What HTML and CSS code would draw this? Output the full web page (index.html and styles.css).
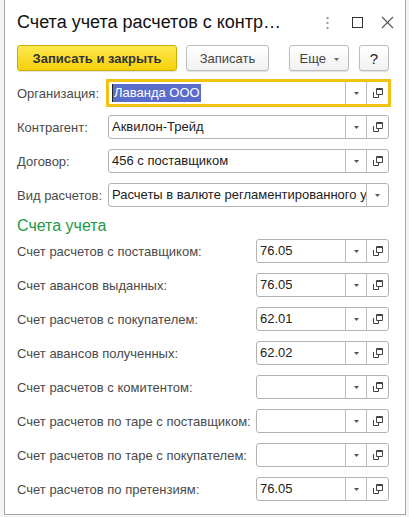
FILE: index.html
```html
<!DOCTYPE html>
<html lang="ru">
<head>
    <meta charset="UTF-8">
    <title>Счета учета расчетов с контрагентами</title>
    <meta name="viewport" content="width=device-width, initial-scale=1.0">
    <link rel="stylesheet" href="styles.css">
</head>
<body>
    <div class="window">
        <div class="titlebar">
            <div class="title">Счета учета расчетов с контр…</div>
            <div class="title-tools">
                <span class="tool">
                    <svg width="3" height="12" viewBox="0 0 3 12"><rect x="0.5" y="0" width="2" height="2" fill="#9a9a9a"/><rect x="0.5" y="5" width="2" height="2" fill="#9a9a9a"/><rect x="0.5" y="10" width="2" height="2" fill="#9a9a9a"/></svg>
                </span>
                <span class="tool">
                    <svg width="11" height="11" viewBox="0 0 11 11"><rect x="0.5" y="0.5" width="10" height="10" fill="none" stroke="#333"/></svg>
                </span>
                <span class="tool">
                    <svg width="13" height="13" viewBox="0 0 13 13"><path d="M1 1L12 12M12 1L1 12" stroke="#555" stroke-width="1.1"/></svg>
                </span>
            </div>
        </div>

        <div class="toolbar">
            <button class="btn btn-main">Записать и закрыть</button>
            <button class="btn btn-save">Записать</button>
            <button class="btn btn-more">Еще <svg width="5" height="3" viewBox="0 0 5 3"><path d="M0 0h5L2.5 3z" fill="#666"/></svg></button>
            <button class="btn btn-help">?</button>
        </div>

        <div class="form">
            <div class="row">
                <div class="label">Организация:</div>
                <div class="field focused">
                    <div class="value"><span class="selected">Лаванда ООО</span></div>
                    <div class="drop"><svg width="5" height="3" viewBox="0 0 5 3"><path d="M0 0h5L2.5 3z" fill="#555"/></svg></div>
                    <div class="open"><svg width="11" height="11" viewBox="0 0 11 11"><path d="M4.5 1.5h6M4.5 0.5h6v6h-6z" fill="none" stroke="#444"/><path d="M1.5 4v5.5h5V7" fill="none" stroke="#444"/></svg></div>
                </div>
            </div>
            <div class="row">
                <div class="label">Контрагент:</div>
                <div class="field">
                    <div class="value">Аквилон-Трейд</div>
                    <div class="drop"><svg width="5" height="3" viewBox="0 0 5 3"><path d="M0 0h5L2.5 3z" fill="#555"/></svg></div>
                    <div class="open"><svg width="11" height="11" viewBox="0 0 11 11"><path d="M4.5 1.5h6M4.5 0.5h6v6h-6z" fill="none" stroke="#444"/><path d="M1.5 4v5.5h5V7" fill="none" stroke="#444"/></svg></div>
                </div>
            </div>
            <div class="row">
                <div class="label">Договор:</div>
                <div class="field">
                    <div class="value">456 с поставщиком</div>
                    <div class="drop"><svg width="5" height="3" viewBox="0 0 5 3"><path d="M0 0h5L2.5 3z" fill="#555"/></svg></div>
                    <div class="open"><svg width="11" height="11" viewBox="0 0 11 11"><path d="M4.5 1.5h6M4.5 0.5h6v6h-6z" fill="none" stroke="#444"/><path d="M1.5 4v5.5h5V7" fill="none" stroke="#444"/></svg></div>
                </div>
            </div>
            <div class="row">
                <div class="label">Вид расчетов:</div>
                <div class="field">
                    <div class="value">Расчеты в валюте регламентированного учета</div>
                    <div class="drop wide"><svg width="5" height="3" viewBox="0 0 5 3"><path d="M0 0h5L2.5 3z" fill="#555"/></svg></div>
                </div>
            </div>

            <div class="section-title">Счета учета</div>

            <div class="row account">
                <div class="label">Счет расчетов с поставщиком:</div>
                <div class="field">
                    <div class="value">76.05</div>
                    <div class="drop"><svg width="5" height="3" viewBox="0 0 5 3"><path d="M0 0h5L2.5 3z" fill="#555"/></svg></div>
                    <div class="open"><svg width="11" height="11" viewBox="0 0 11 11"><path d="M4.5 1.5h6M4.5 0.5h6v6h-6z" fill="none" stroke="#444"/><path d="M1.5 4v5.5h5V7" fill="none" stroke="#444"/></svg></div>
                </div>
            </div>
            <div class="row account">
                <div class="label">Счет авансов выданных:</div>
                <div class="field">
                    <div class="value">76.05</div>
                    <div class="drop"><svg width="5" height="3" viewBox="0 0 5 3"><path d="M0 0h5L2.5 3z" fill="#555"/></svg></div>
                    <div class="open"><svg width="11" height="11" viewBox="0 0 11 11"><path d="M4.5 1.5h6M4.5 0.5h6v6h-6z" fill="none" stroke="#444"/><path d="M1.5 4v5.5h5V7" fill="none" stroke="#444"/></svg></div>
                </div>
            </div>
            <div class="row account">
                <div class="label">Счет расчетов с покупателем:</div>
                <div class="field">
                    <div class="value">62.01</div>
                    <div class="drop"><svg width="5" height="3" viewBox="0 0 5 3"><path d="M0 0h5L2.5 3z" fill="#555"/></svg></div>
                    <div class="open"><svg width="11" height="11" viewBox="0 0 11 11"><path d="M4.5 1.5h6M4.5 0.5h6v6h-6z" fill="none" stroke="#444"/><path d="M1.5 4v5.5h5V7" fill="none" stroke="#444"/></svg></div>
                </div>
            </div>
            <div class="row account">
                <div class="label">Счет авансов полученных:</div>
                <div class="field">
                    <div class="value">62.02</div>
                    <div class="drop"><svg width="5" height="3" viewBox="0 0 5 3"><path d="M0 0h5L2.5 3z" fill="#555"/></svg></div>
                    <div class="open"><svg width="11" height="11" viewBox="0 0 11 11"><path d="M4.5 1.5h6M4.5 0.5h6v6h-6z" fill="none" stroke="#444"/><path d="M1.5 4v5.5h5V7" fill="none" stroke="#444"/></svg></div>
                </div>
            </div>
            <div class="row account">
                <div class="label">Счет расчетов с комитентом:</div>
                <div class="field">
                    <div class="value"></div>
                    <div class="drop"><svg width="5" height="3" viewBox="0 0 5 3"><path d="M0 0h5L2.5 3z" fill="#555"/></svg></div>
                    <div class="open"><svg width="11" height="11" viewBox="0 0 11 11"><path d="M4.5 1.5h6M4.5 0.5h6v6h-6z" fill="none" stroke="#444"/><path d="M1.5 4v5.5h5V7" fill="none" stroke="#444"/></svg></div>
                </div>
            </div>
            <div class="row account">
                <div class="label">Счет расчетов по таре с поставщиком:</div>
                <div class="field">
                    <div class="value"></div>
                    <div class="drop"><svg width="5" height="3" viewBox="0 0 5 3"><path d="M0 0h5L2.5 3z" fill="#555"/></svg></div>
                    <div class="open"><svg width="11" height="11" viewBox="0 0 11 11"><path d="M4.5 1.5h6M4.5 0.5h6v6h-6z" fill="none" stroke="#444"/><path d="M1.5 4v5.5h5V7" fill="none" stroke="#444"/></svg></div>
                </div>
            </div>
            <div class="row account">
                <div class="label">Счет расчетов по таре с покупателем:</div>
                <div class="field">
                    <div class="value"></div>
                    <div class="drop"><svg width="5" height="3" viewBox="0 0 5 3"><path d="M0 0h5L2.5 3z" fill="#555"/></svg></div>
                    <div class="open"><svg width="11" height="11" viewBox="0 0 11 11"><path d="M4.5 1.5h6M4.5 0.5h6v6h-6z" fill="none" stroke="#444"/><path d="M1.5 4v5.5h5V7" fill="none" stroke="#444"/></svg></div>
                </div>
            </div>
            <div class="row account">
                <div class="label">Счет расчетов по претензиям:</div>
                <div class="field">
                    <div class="value">76.05</div>
                    <div class="drop"><svg width="5" height="3" viewBox="0 0 5 3"><path d="M0 0h5L2.5 3z" fill="#555"/></svg></div>
                    <div class="open"><svg width="11" height="11" viewBox="0 0 11 11"><path d="M4.5 1.5h6M4.5 0.5h6v6h-6z" fill="none" stroke="#444"/><path d="M1.5 4v5.5h5V7" fill="none" stroke="#444"/></svg></div>
                </div>
            </div>
        </div>
    </div>
</body>
</html>
```

FILE: styles.css
```css
body {
    margin: 0;
    padding: 0;
    background-color: #f4f4f4;
    font-family: 'Liberation Sans', Arial, sans-serif;
    font-size: 13px;
}

.window {
    margin-left: 4px;
    width: 402px;
    box-sizing: border-box;
    background-color: #fff;
    border: 1px solid #a5a5a5;
    border-top: none;
}

/* title */
.titlebar {
    display: flex;
    align-items: center;
    padding: 12px 3px 12px 12px;
}

.title {
    font-size: 18px;
    line-height: 21px;
    color: #111;
    white-space: nowrap;
}

.title-tools {
    margin-left: auto;
    display: flex;
}

.tool {
    width: 30px;
    height: 21px;
    display: flex;
    align-items: center;
    justify-content: center;
}

/* command bar */
.toolbar {
    display: flex;
    padding: 0 16px 0 12px;
    height: 26px;
}

.btn {
    height: 26px;
    box-sizing: border-box;
    padding: 0;
    font-family: inherit;
    font-size: 13px;
    color: #444;
    background: linear-gradient(#ffffff, #f1f1f1);
    border: 1px solid #bdbdbd;
    border-radius: 3px;
    box-shadow: 0 1px 1px rgba(0, 0, 0, 0.12);
    cursor: pointer;
}

.btn-main {
    width: 160px;
    font-weight: bold;
    color: #333;
    background: linear-gradient(#fde94f, #f5d10c);
    border-color: #cdac00;
}

.btn-save {
    width: 83px;
    margin-left: 9px;
}

.btn-more {
    width: 60px;
    margin-left: 20px;
}

.btn-more svg {
    margin-left: 4px;
    vertical-align: middle;
}

.btn-help {
    width: 30px;
    margin-left: 10px;
    font-size: 15px;
    color: #222;
}

/* form */
.form {
    padding: 10px 16px 3px 12px;
}

.row {
    display: flex;
    align-items: center;
    height: 24px;
    margin-bottom: 10px;
}

.label {
    width: 91px;
    flex-shrink: 0;
    color: #4a4a4a;
    white-space: nowrap;
}

.account .label {
    width: 239px;
}

.field {
    flex: 1;
    height: 24px;
    box-sizing: border-box;
    display: flex;
    border: 1px solid #b3b3b3;
    border-radius: 3px;
    background-color: #fff;
    min-width: 0;
}

.field.focused {
    border-color: #f3c10f;
    border-radius: 0;
    box-shadow: 0 0 0 2px #f3c10f;
}

.value {
    flex: 1;
    min-width: 0;
    padding-left: 3px;
    line-height: 22px;
    color: #222;
    white-space: nowrap;
    overflow: hidden;
}

.selected {
    background-color: #5a6dca;
    color: #fff;
    padding: 1px 1px 2px 1px;
    border-left: 1px solid #222;
}

.drop,
.open {
    flex-shrink: 0;
    display: flex;
    align-items: center;
    justify-content: center;
    border-left: 1px solid #bcbcbc;
}

.drop {
    width: 20px;
}

.drop.wide {
    width: 21px;
}

.open {
    width: 21px;
}

.section-title {
    font-size: 16px;
    line-height: 18px;
    color: #1b9b45;
    margin-bottom: 4px;
}
```
